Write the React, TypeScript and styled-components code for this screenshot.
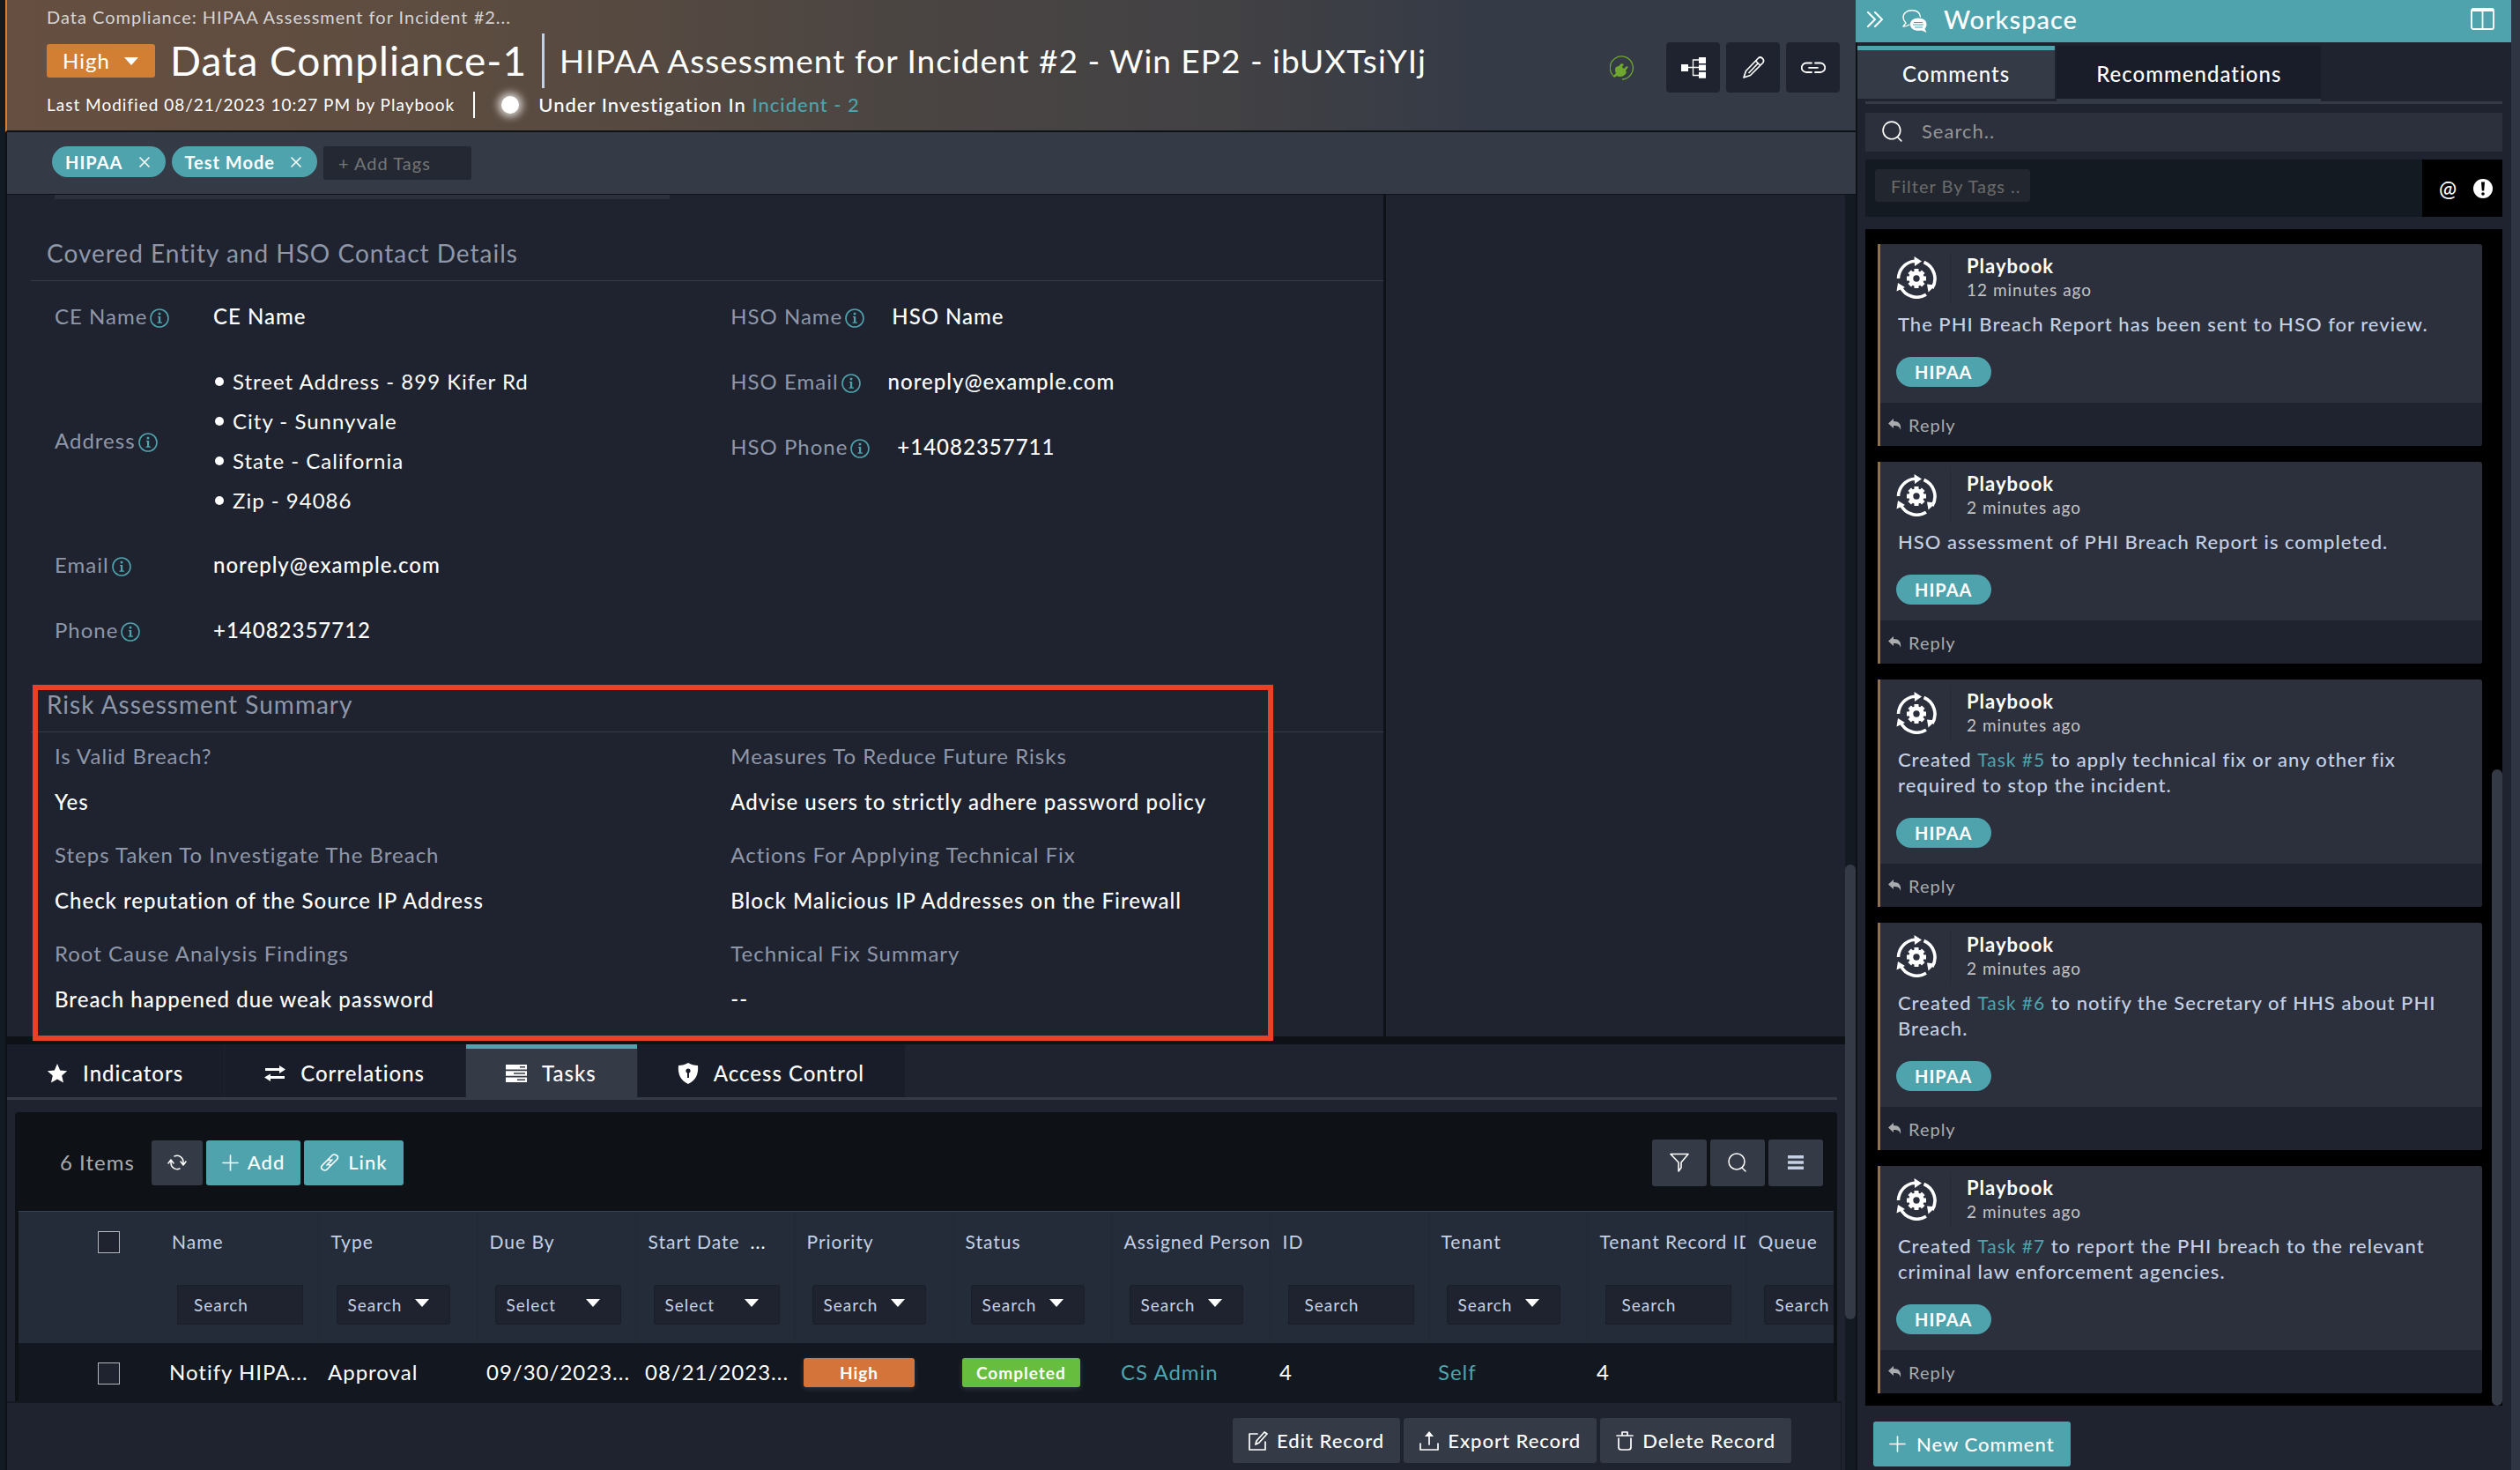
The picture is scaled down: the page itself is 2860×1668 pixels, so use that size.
import React from 'react';
import styled, { createGlobalStyle, css } from 'styled-components';

const c = {
  bg: '#1e232f',
  deep: '#0e1116',
  track: '#141a22',
  panel: '#343a46',
  card: '#2b303c',
  tab: '#181d29',
  teal: '#4fa3ad',
  muted: '#8f97a9',
  pale: '#c5d0e4',
  orange: '#d37f33',
};

const GlobalStyle = createGlobalStyle`
  *, *::before, *::after { box-sizing: border-box; }
  body {
    margin: 0;
    background: ${c.bg};
    color: #fff;
    font-family: Lato, "Open Sans", sans-serif;
    font-size: 24px;
    line-height: 30px;
    letter-spacing: 1px;
  }
  button, input, select { font: inherit; color: inherit; letter-spacing: inherit; }
  button { cursor: pointer; border: 0; padding: 0; background: none; }
  a { color: ${c.teal}; text-decoration: none; }
  h1, h2, h3, p, ul, dl, dd { margin: 0; padding: 0; font-weight: 400; }
  svg { display: block; flex: none; }
`;

/* ---------- icons ---------- */

type IconProps = { size?: number };
const line = { fill: 'none', stroke: 'currentColor', strokeLinecap: 'round', strokeLinejoin: 'round' } as const;

const Caret = ({ size = 16 }: IconProps) => (
  <svg width={size} height={size / 2 + 1} viewBox="0 0 16 9"><path d="M0 0h16L8 9z" fill="currentColor" /></svg>
);
const CloseIcon = () => (
  <svg width="12" height="12" viewBox="0 0 12 12" {...line} strokeWidth="1.6"><path d="M1 1l10 10M11 1L1 11" /></svg>
);
const SitemapIcon = () => (
  <svg width="28" height="26" viewBox="0 0 28 26">
    <path d="M8 12.500h12M20 4h-6.500v17.500H20" stroke="currentColor" strokeWidth="1.3" fill="none" />
    <path d="M0 9h8v8H0zM20 1h8v7h-8zM20 9.500h8v6.500h-8zM20 17.800h8v7h-8z" fill="currentColor" />
  </svg>
);
const PencilIcon = () => (
  <svg width="26" height="26" viewBox="0 0 26 26" {...line} strokeWidth="1.7">
    <path d="M2 24l2.500-7.500L18.500 2q2-2 4.500 0t1 5L9.500 21.500zM15.500 5l5 5M18 8L8 18.500" />
  </svg>
);
const ChainIcon = () => (
  <svg width="28" height="14" viewBox="0 0 28 14" {...line} strokeWidth="1.8">
    <path d="M12 1.500H6a5 5 0 000 10.500h6M16 1.500h6a5 5 0 010 10.500h-6M9 6.800h10" />
  </svg>
);
const PlugIcon = () => (
  <svg width="28" height="28" viewBox="0 0 28 28">
    <path d="M5 24A13 13 0 1114 27" fill="none" stroke="#6fa82e" strokeWidth="1.300" />
    <path d="M4 23l3-3q-2-4 0-7l3-1 3-3 3 1-2 3 2 2 3-3 2 1-3 4 1 2q-2 5-8 5-2 0-3-1l-3 2z" fill="#6fa82e" />
  </svg>
);
const InfoIcon = () => (
  <svg width="24" height="24" viewBox="0 0 24 24" role="img" aria-label="Info">
    <circle cx="12" cy="12" r="10" fill="none" stroke={c.teal} strokeWidth="1.6" />
    <path d="M10 10h3.200v6.500H15v1.200H9.500v-1.200H11v-5.300h-1z" fill={c.teal} />
    <circle cx="12" cy="7" r="1.500" fill={c.teal} />
  </svg>
);
const StarIcon = () => (
  <svg width="24" height="24" viewBox="0 0 24 24">
    <path d="M12 1l3.200 7.500 8 .8-6 5.300 1.800 8L12 18.400 5 22.600l1.800-8-6-5.300 8-.8z" fill="currentColor" />
  </svg>
);
const SwapIcon = () => (
  <svg width="24" height="18" viewBox="0 0 24 18">
    <path d="M1 3h16V0l7 4.500-7 4.500V6H1zM23 12H7V9.500L0 13.500 7 18v-3h16z" fill="currentColor" />
  </svg>
);
const TasksIcon = () => (
  <svg width="24" height="20" viewBox="0 0 24 20">
    <path d="M0 0h24v5.500H0zM0 7.200h24v5.500H0zM0 14.400h24V20H0z" fill="currentColor" />
    <path d="M16 2h6v1.600h-6zM9 9.200h13v1.600H9zM13 16.400h9V18h-9z" fill={c.panel} />
  </svg>
);
const ShieldIcon = () => (
  <svg width="24" height="24" viewBox="0 0 24 24">
    <path d="M12 0c3 2 7 3 11 3 1 9-2 17-11 21C3 20 0 12 1 3c4 0 8-1 11-3z" fill="currentColor" />
    <circle cx="12" cy="9" r="2.600" fill={c.tab} /><path d="M11 9h2v8h-2z" fill={c.tab} />
  </svg>
);
const RefreshIcon = () => (
  <svg width="22" height="20" viewBox="0 0 22 20" {...line} strokeWidth="1.5">
    <path d="M4 8v3a7 7 0 0010 6M18 12V9A7 7 0 008 3M1 11l3-4 3 4M15 9l3 4 3-4" />
  </svg>
);
const PlusIcon = () => (
  <svg width="19" height="19" viewBox="0 0 19 19" {...line} strokeWidth="1.6"><path d="M9.500 1v17M1 9.500h17" /></svg>
);
const ClipIcon = () => (
  <svg width="22" height="22" viewBox="0 0 22 22" {...line} strokeWidth="1.7">
    <path d="M9 8l5-5q2-2 5 0t0 5l-5 5q-2 2-5 0M13 9q-2-2-5 0l-5 5q-3 3 0 5t5 0l5-5M8 14l6-6" />
  </svg>
);
const FilterIcon = () => (
  <svg width="22" height="22" viewBox="0 0 22 22" {...line} strokeWidth="1.6"><path d="M1 1.500h20l-8 9.500v6l-3 4V11z" /></svg>
);
const LensIcon = ({ size = 22 }: IconProps) => (
  <svg width={size} height={size} viewBox="0 0 22 22" {...line} strokeWidth="1.5"><circle cx="10" cy="10" r="9" /><path d="M16 17l4 4" /></svg>
);
const MenuIcon = () => (
  <svg width="18" height="16" viewBox="0 0 18 16"><path d="M0 0h18v3.500H0zM0 6.200h18v3.500H0zM0 12.400h18V16H0z" fill={c.pale} /></svg>
);
const EditIcon = () => (
  <svg width="22" height="22" viewBox="0 0 22 22" {...line} strokeWidth="1.7">
    <path d="M10 3H1v18h18v-9M8 15l1-4 9-10 3 2-9 10z" />
  </svg>
);
const ExportIcon = () => (
  <svg width="22" height="22" viewBox="0 0 22 22" {...line} strokeWidth="1.7">
    <path d="M1 14v7h20v-7M11 15V3" /><path d="M6 6l5-6 5 6z" fill="currentColor" stroke="none" />
  </svg>
);
const TrashIcon = () => (
  <svg width="20" height="22" viewBox="0 0 20 22" {...line} strokeWidth="1.7">
    <path d="M1 5h18M7 5V1h6v4M3 8v10q0 3 3 3h8q3 0 3-3V8" />
  </svg>
);
const ChevronsIcon = () => (
  <svg width="18" height="18" viewBox="0 0 18 18" {...line} strokeWidth="2"><path d="M1 1l8 8-8 8M9 1l8 8-8 8" /></svg>
);
const ChatIcon = () => (
  <svg width="28" height="26" viewBox="0 0 28 26">
    <path d="M4 15q-3-3-3-6C1 4 5 .8 11 .8S20 4 20.500 8M4 15l-3 4q4 0 7-2" {...line} strokeWidth="1.400" />
    <path d="M18 9.500c6 0 9.500 3 9.500 7 0 2-.5 3.500-2 5l2 4.500-5.500-2.500C14 25 9 21.500 9 16.500c0-4 3.500-7 9-7z" fill="currentColor" />
    <path d="M13 14.500h10M12 17h12M14 20h9" stroke={c.teal} strokeWidth="1.200" />
  </svg>
);
const SplitIcon = () => (
  <svg width="27" height="25" viewBox="0 0 27 25" fill="none" stroke="currentColor">
    <rect x="1" y="1" width="25" height="23" rx="2" strokeWidth="1.800" />
    <path d="M1 2.500h25" strokeWidth="3" /><path d="M13.500 3v21" strokeWidth="1.800" />
  </svg>
);
const AlertIcon = () => (
  <svg width="22" height="22" viewBox="0 0 22 22">
    <circle cx="11" cy="11" r="11" fill="#fff" />
    <path d="M9 3.500h4l-.8 10h-2.400z" fill="#000" /><circle cx="11" cy="17" r="1.800" fill="#000" />
  </svg>
);
const ReplyIcon = () => (
  <svg width="15" height="13" viewBox="0 0 15 13">
    <path d="M6 0v3c6 0 9 3 8 10-1-4-3-5-8-5v3L0 5.500z" fill="currentColor" />
  </svg>
);
const PlaybookIcon = () => (
  <svg width="46" height="48" viewBox="0 0 46 48">
    <g fill="none" stroke="#fff" strokeWidth="3.600">
      <path d="M2.500 25A20.500 20.500 0 0121 5.200" />
      <path d="M31.500 6.500A20.500 20.500 0 0141 36" />
      <path d="M34 43.300A20.500 20.500 0 015 34.500" />
    </g>
    <path d="M20.500 0l8.500 5.500-8 5.500zM45 32.500l-8.500 8-1.500-9zM.5 39.500L2 30l8 5z" fill="#fff" />
    <circle cx="23" cy="25" r="6.200" fill="none" stroke="#fff" strokeWidth="5" />
    <g stroke="#fff" strokeWidth="5">
      <path d="M23 14v4M23 32v4M12 25h4M30 25h4M15.200 17.200l3 3M27.800 29.800l3 3M30.800 17.200l-3 3M18.200 29.800l-3 3" />
    </g>
  </svg>
);

/* ---------- shell ---------- */

const Shell = styled.div`
  display: grid;
  grid-template-columns: 6px minmax(0, 1fr) 744px 10px;
  height: 100vh;
  overflow: hidden;
`;
const Gutter = styled.div<{ $light?: boolean }>`
  background: ${p => (p.$light ? '#2f3543' : c.track)};
`;
const Main = styled.main`
  display: flex;
  flex-direction: column;
  min-width: 0;
  border-left: 2px solid ${c.deep};
`;

/* ---------- record header ---------- */

const Header = styled.header`
  display: flex;
  justify-content: space-between;
  align-items: flex-start;
  height: 150px;
  margin-left: -2px;
  padding: 7px 18px 0 45px;
  border-left: 2px solid ${c.orange};
  border-bottom: 2px solid ${c.deep};
  background: linear-gradient(90deg, #664f40 0%, #5c4c40 25%, #4b4542 48%, #424144 66%, #343a46 80%);
`;
const HeaderText = styled.div`
  display: flex;
  flex-direction: column;
`;
const Crumb = styled.div`
  font-size: 20px;
  line-height: 24px;
  color: #d5d5d5;
`;
const TitleRow = styled.div`
  display: flex;
  align-items: center;
  height: 62px;
  margin: 7px 0 5px;
`;
const Severity = styled.button`
  display: flex;
  align-items: center;
  justify-content: space-between;
  width: 123px;
  height: 38px;
  padding: 0 19px 0 18px;
  border-radius: 3px;
  background: ${c.orange};
`;
const RecordId = styled.h1`
  margin-left: 17px;
  font-size: 46px;
  line-height: 62px;
`;
const RecordName = styled.h2`
  margin-left: 17px;
  padding-left: 17px;
  border-left: 3px solid ${c.pale};
  font-size: 37px;
  line-height: 62px;
`;
const MetaRow = styled.div`
  display: flex;
  align-items: center;
  height: 28px;
  font-size: 19px;
`;
const Modified = styled.span`
  padding-right: 21px;
  border-right: 2px solid #fff;
`;
const Glow = styled.span`
  width: 20px;
  height: 20px;
  margin: 0 22px 0 30px;
  border-radius: 50%;
  background: #fff;
  box-shadow: 0 0 8px 4px rgba(255, 255, 255, 0.7);
`;
const Status = styled.span`
  font-size: 22px;
  font-weight: 500;
`;
const HeaderTools = styled.div`
  display: flex;
  align-items: center;
  gap: 7px;
  margin-top: 41px;
`;
const Health = styled.span`
  margin-right: 29px;
`;
const SquareButton = styled.button`
  display: grid;
  place-items: center;
  width: 61px;
  height: 57px;
  border-radius: 4px;
  background: ${c.bg};
`;

const TagBar = styled.div`
  display: flex;
  align-items: flex-start;
  gap: 7px;
  height: 71px;
  padding: 16px 51px 0;
  background: ${c.panel};
  border-bottom: 1px solid ${c.deep};
  font-size: 20px;
`;
const Tag = styled.span`
  display: flex;
  align-items: center;
  gap: 18px;
  height: 35px;
  padding: 0 18px 0 15px;
  border-radius: 18px;
  background: ${c.teal};
  font-weight: 700;
`;
const TagInput = styled.input`
  width: 168px;
  height: 38px;
  padding: 0 17px;
  border: 0;
  border-radius: 3px;
  background: #232833;
  &::placeholder { color: #757575; opacity: 1; }
`;

/* ---------- scrolling body ---------- */

const Body = styled.div`
  display: grid;
  grid-template-columns: minmax(0, 1fr) 12px;
  flex: 1;
  min-height: 0;
`;
const BodyColumn = styled.div`
  display: flex;
  flex-direction: column;
  min-width: 0;
  min-height: 0;
  padding-right: 4px;
`;
const Scrollbar = styled.div<{ $rows: string; $bg: string }>`
  display: grid;
  grid-template-rows: ${p => p.$rows};
  background: ${p => p.$bg};
  &::before { content: ''; grid-row: 2; border-radius: 6px; background: ${c.panel}; }
`;
const Details = styled.section`
  display: grid;
  grid-template-columns: minmax(0, 3fr) minmax(0, 1fr);
  margin-right: -4px;
  border-bottom: 9px solid ${c.deep};
  dd { font-weight: 500; }
`;
const DetailMain = styled.div`
  padding: 0 0 27px 27px;
  border-right: 3px solid ${c.deep};
`;
const CutField = styled.div`
  width: 698px;
  height: 5px;
  margin: 0 0 45px 27px;
  background: ${c.card};
`;
const SectionTitle = styled.h3`
  padding: 0 18px 15px;
  border-bottom: 1px solid #333b4d;
  font-size: 28px;
  line-height: 32px;
  color: ${c.muted};
`;
const Columns = styled.div`
  display: grid;
  grid-template-columns: 1fr 1fr;
  padding-top: 3px;
  dl { padding-left: 27px; }
`;
const Field = styled.div<{ $fixed?: boolean }>`
  display: flex;
  align-items: center;
  padding: 22px 0;
  ${p => (p.$fixed ? css`dt { width: 180px; }` : css`dt { padding-right: 30px; }`)}
`;
const ListField = styled(Field)`
  padding: 14px 0;
`;
const Term = styled.dt`
  display: flex;
  align-items: center;
  gap: 2px;
  color: ${c.muted};
  svg { margin-top: 4px; }
`;
const Bullets = styled.ul`
  list-style: none;
  line-height: 45px;
  li { display: flex; align-items: center; gap: 10px; }
  li::before { content: ''; width: 10px; height: 10px; margin-left: 2px; border-radius: 50%; background: #fff; }
`;
const Risk = styled.section`
  position: relative;
  margin-top: 31px;
`;
const Highlight = styled.div`
  position: absolute;
  inset: -6px 125px -32px 2px;
  border: 6px solid #ea4025;
`;
const RiskGrid = styled.dl`
  display: grid;
  grid-template-columns: 1fr 1fr;
  row-gap: 30px;
  padding-top: 12px;
  > div { padding-left: 27px; }
  dt { color: ${c.muted}; }
  dd { margin-top: 22px; }
`;

/* ---------- tabs ---------- */

const TabList = styled.div`
  display: flex;
  gap: 1px;
  height: 63px;
  margin-right: 5px;
  border-bottom: 3px solid ${c.panel};
`;
const Tab = styled.button<{ $active?: boolean }>`
  display: flex;
  align-items: center;
  gap: 17px;
  height: ${p => (p.$active ? 63 : 60)}px;
  padding: 5px 46px 0 45px;
  background: ${p => (p.$active ? c.panel : c.tab)};
  font-weight: 500;
  ${p => p.$active && css`padding-top: 0; padding-bottom: 2px; border-top: 5px solid ${c.teal};`}
`;

/* ---------- tasks ---------- */

const Tasks = styled.section`
  display: flex;
  flex-direction: column;
  flex: 1;
  min-height: 0;
  overflow: hidden;
  margin: 14px 5px 0 9px;
  padding: 0 4px;
  border-radius: 4px 4px 0 0;
  background: ${c.deep};
`;
const Toolbar = styled.div`
  display: flex;
  align-items: center;
  gap: 4px;
  height: 112px;
  padding: 2px 12px 0 47px;
`;
const Count = styled.span`
  margin-right: 15px;
  color: #a9abae;
`;
const Spacer = styled.span`
  flex: 1;
`;
const Button = styled.button<{ $tone?: 'teal' | 'panel' }>`
  display: flex;
  align-items: center;
  justify-content: center;
  gap: 10px;
  height: 51px;
  padding: 0 18px;
  border-radius: 3px;
  background: ${p => (p.$tone === 'teal' ? c.teal : c.panel)};
  font-size: 22px;
  font-weight: 500;
`;
const ToolButton = styled(Button)`
  width: 62px;
  height: 53px;
`;
const TableClip = styled.div`
  overflow: hidden;
  border-top: 1px solid #33425a;
`;
const Table = styled.table`
  width: 2140px;
  table-layout: fixed;
  border-collapse: collapse;
  th, td { padding: 0; text-align: left; font-weight: 400; white-space: nowrap; overflow: hidden; }
  thead th { height: 149px; background: #232c38; border-right: 1px solid #202833; vertical-align: top; }
  tbody td { height: 66px; padding-left: 11px; background: #121720; }
  thead th:first-child { border-right: 0; }
`;
const HeadCell = styled.div`
  display: flex;
  flex-direction: column;
  gap: 34px;
  padding: 19px 0 0 14px;
  font-size: 21px;
  line-height: 30px;
  color: ${c.pale};
`;
const More = styled.span`
  margin-left: 12px;
  color: #fff;
`;
const CheckCell = styled.div`
  display: flex;
  justify-content: flex-end;
  padding: 22px 45px 0 0;
`;
const RowCheck = styled(CheckCell)`
  padding-top: 2px;
`;
const Checkbox = styled.input`
  appearance: none;
  width: 25px;
  height: 25px;
  margin: 0;
  border: 1px solid #b4b7bc;
  background: ${c.bg};
`;
const filterBox = css`
  height: 45px;
  border: 1px solid #191e28;
  background: ${c.bg};
  color: ${c.pale};
  font-size: 19px;
`;
const FilterInput = styled.input`
  ${filterBox}
  width: 143px;
  margin-left: 6px;
  padding: 0 18px;
  &::placeholder { color: inherit; opacity: 1; }
`;
const SelectWrap = styled.label<{ $wide?: boolean }>`
  position: relative;
  width: ${p => (p.$wide ? 143 : 129)}px;
  margin-left: 6px;
  svg { position: absolute; top: 16px; right: 24px; pointer-events: none; color: #fff; }
`;
const Select = styled.select`
  ${filterBox}
  display: block;
  appearance: none;
  width: 100%;
  padding: 0 12px;
  border-radius: 3px;
`;
const Badge = styled.span<{ $color: string }>`
  display: inline-block;
  min-width: 126px;
  padding: 0 16px;
  border-radius: 3px;
  background: ${p => p.$color};
  box-shadow: 0 2px 6px rgba(255, 255, 255, 0.12);
  font-size: 19px;
  line-height: 33px;
  font-weight: 700;
  text-align: center;
  vertical-align: middle;
`;
const Actions = styled.footer`
  display: flex;
  flex: none;
  justify-content: flex-end;
  gap: 4px;
  height: 78px;
  padding: 17px 56px 0;
  border-top: 2px solid #141821;
  border-right: 1px solid #141821;
`;

/* ---------- workspace ---------- */

const Aside = styled.aside`
  display: flex;
  flex-direction: column;
  min-width: 0;
  min-height: 0;
  border-left: 2px solid ${c.deep};
`;
const AsideHead = styled.header`
  display: flex;
  align-items: center;
  height: 48px;
  margin-left: -2px;
  padding: 0 19px 5px 13px;
  background: ${c.teal};
`;
const AsideTitle = styled.h2`
  flex: 1;
  margin-left: 19px;
  font-size: 29px;
  line-height: 42px;
  font-weight: 500;
`;
const ChatWrap = styled.span`
  margin: 4px 0 0 22px;
`;
const AsideTabs = styled.div`
  display: flex;
  gap: 2px;
  height: 66px;
  margin-top: 4px;
`;
const AsideTab = styled.button<{ $active?: boolean }>`
  height: ${p => (p.$active ? 60 : 63)}px;
  padding: ${p => (p.$active ? '0 51px 2px' : '3px 45px 0')};
  border-top: ${p => (p.$active ? `5px solid ${c.teal}` : 0)};
  border-bottom: ${p => (p.$active ? 0 : `3px solid ${c.panel}`)};
  background: ${p => (p.$active ? c.panel : c.tab)};
  font-weight: 500;
`;
const AsideBody = styled.div`
  display: flex;
  flex-direction: column;
  flex: 1;
  min-height: 0;
  margin: -3px 10px 0 9px;
  border-top: 3px solid ${c.panel};
`;
const SearchBox = styled.label`
  display: flex;
  align-items: center;
  gap: 21px;
  height: 44px;
  margin-top: 10px;
  padding: 0 19px 2px;
  background: ${c.card};
  input {
    flex: 1;
    border: 0;
    padding: 0;
    background: none;
    outline: 0;
    font-size: 22px;
  }
  input::placeholder { color: #959595; opacity: 1; }
`;
const FilterBar = styled.div`
  display: flex;
  justify-content: space-between;
  height: 65px;
  margin-top: 9px;
  padding-left: 11px;
  background: ${c.track};
`;
const FilterTags = styled.input`
  width: 176px;
  height: 37px;
  margin-top: 11px;
  padding: 0 0 0 18px;
  border: 0;
  border-radius: 3px;
  background: #22272f;
  font-size: 20px;
  &::placeholder { color: #6b6b6b; opacity: 1; }
`;
const Toggles = styled.div`
  display: flex;
  align-items: center;
  justify-content: space-between;
  width: 91px;
  padding: 0 11px 0 19px;
  background: #000;
  font-weight: 500;
`;
const Feed = styled.div`
  display: grid;
  grid-template-columns: minmax(0, 1fr) 12px;
  flex: 1;
  min-height: 0;
  margin-top: 14px;
  background: #000;
`;
const FeedList = styled.div`
  display: flex;
  flex-direction: column;
  gap: 18px;
  padding: 17px 11px 14px 14px;
`;
const Card = styled.article`
  border-left: 3px solid #8f7340;
  border-radius: 0 3px 3px 0;
  background: ${c.card};
`;
const CardBody = styled.div`
  padding: 8px 30px 18px 20px;
`;
const Author = styled.div`
  display: flex;
  align-items: center;
  height: 61px;
`;
const Avatar = styled.span`
  padding: 6px 15px 7px 0;
  margin-left: -2px;
  border-right: 1px solid #252a35;
`;
const Names = styled.div`
  margin: 0 0 2px 18px;
`;
const Name = styled.div`
  font-size: 22px;
  line-height: 28px;
  font-weight: 700;
`;
const Ago = styled.div`
  font-size: 19px;
  line-height: 26px;
  color: #c3c4c7;
`;
const Message = styled.p`
  margin-top: 7px;
  font-size: 22px;
  font-weight: 500;
  line-height: 29px;
  color: ${c.pale};
  a { font-size: 21px; font-weight: 400; }
`;
const Pill = styled.span`
  display: inline-block;
  margin: 23px 0 0 -2px;
  padding: 0 21px;
  border-radius: 17px;
  background: ${c.teal};
  font-size: 20px;
  line-height: 34px;
  font-weight: 700;
  vertical-align: top;
`;
const Reply = styled.button`
  display: flex;
  align-items: center;
  gap: 8px;
  width: 100%;
  height: 49px;
  padding: 0 9px;
  border-radius: 0 0 3px 0;
  background: ${c.bg};
  color: #a9abae;
  font-size: 20px;
`;
const AsideFoot = styled.div`
  padding: 18px 9px 4px;
`;
const NewComment = styled(Button)`
  gap: 12px;
`;

/* ---------- data ---------- */

type Col = { label: string; kind: 'input' | 'search' | 'select'; more?: boolean };
const columns: Col[] = [
  { label: 'Name', kind: 'input' },
  { label: 'Type', kind: 'search' },
  { label: 'Due By', kind: 'select' },
  { label: 'Start Date', kind: 'select', more: true },
  { label: 'Priority', kind: 'search' },
  { label: 'Status', kind: 'search' },
  { label: 'Assigned Person', kind: 'search' },
  { label: 'ID', kind: 'input' },
  { label: 'Tenant', kind: 'search' },
  { label: 'Tenant Record ID', kind: 'input' },
  { label: 'Queue', kind: 'search' },
];

const comments: { ago: string; text: React.ReactNode }[] = [
  { ago: '12 minutes ago', text: 'The PHI Breach Report has been sent to HSO for review.' },
  { ago: '2 minutes ago', text: 'HSO assessment of PHI Breach Report is completed.' },
  { ago: '2 minutes ago', text: <>Created <a href="#task-5">Task #5</a> to apply technical fix or any other fix required to stop the incident.</> },
  { ago: '2 minutes ago', text: <>Created <a href="#task-6">Task #6</a> to notify the Secretary of HHS about PHI Breach.</> },
  { ago: '2 minutes ago', text: <>Created <a href="#task-7">Task #7</a> to report the PHI breach to the relevant criminal law enforcement agencies.</> },
];

const risks = [
  ['Is Valid Breach?', 'Yes'],
  ['Measures To Reduce Future Risks', 'Advise users to strictly adhere password policy'],
  ['Steps Taken To Investigate The Breach', 'Check reputation of the Source IP Address'],
  ['Actions For Applying Technical Fix', 'Block Malicious IP Addresses on the Firewall'],
  ['Root Cause Analysis Findings', 'Breach happened due weak password'],
  ['Technical Fix Summary', '--'],
];

const Info = ({ label, value, fixed }: { label: string; value: string; fixed?: boolean }) => (
  <Field $fixed={fixed}><Term>{label}<InfoIcon /></Term><dd>{value}</dd></Field>
);

const ColumnHead = ({ label, kind, more }: Col) => (
  <th scope="col">
    <HeadCell>
      <div>{label}{more && <More>...</More>}</div>
      {kind === 'input' ? (
        <FilterInput placeholder="Search" aria-label={`Search ${label}`} />
      ) : (
        <SelectWrap $wide={kind === 'select'}>
          <Select aria-label={`Filter ${label}`}><option>{kind === 'select' ? 'Select' : 'Search'}</option></Select>
          <Caret />
        </SelectWrap>
      )}
    </HeadCell>
  </th>
);

export default function App() {
  return (
    <>
      <GlobalStyle />
      <Shell>
        <Gutter />
        <Main>
          <Header>
            <HeaderText>
              <Crumb>Data Compliance: HIPAA Assessment for Incident #2...</Crumb>
              <TitleRow>
                <Severity>High<Caret /></Severity>
                <RecordId>Data Compliance-1</RecordId>
                <RecordName>HIPAA Assessment for Incident #2 - Win EP2 - ibUXTsiYIj</RecordName>
              </TitleRow>
              <MetaRow>
                <Modified>Last Modified 08/21/2023 10:27 PM by Playbook</Modified>
                <Glow />
                <Status>Under Investigation In <a href="#incident-2">Incident - 2</a></Status>
              </MetaRow>
            </HeaderText>
            <HeaderTools>
              <Health><PlugIcon /></Health>
              <SquareButton aria-label="Hierarchy"><SitemapIcon /></SquareButton>
              <SquareButton aria-label="Edit"><PencilIcon /></SquareButton>
              <SquareButton aria-label="Copy link"><ChainIcon /></SquareButton>
            </HeaderTools>
          </Header>
          <TagBar>
            <Tag>HIPAA<CloseIcon /></Tag>
            <Tag>Test Mode<CloseIcon /></Tag>
            <TagInput placeholder="+ Add Tags" aria-label="Add tags" />
          </TagBar>
          <Body>
            <BodyColumn>
              <Details>
                <DetailMain>
                  <CutField />
                  <SectionTitle>Covered Entity and HSO Contact Details</SectionTitle>
                  <Columns>
                    <dl>
                      <Info fixed label="CE Name" value="CE Name" />
                      <ListField $fixed>
                        <Term>Address<InfoIcon /></Term>
                        <dd>
                          <Bullets>
                            <li>Street Address - 899 Kifer Rd</li>
                            <li>City - Sunnyvale</li>
                            <li>State - California</li>
                            <li>Zip - 94086</li>
                          </Bullets>
                        </dd>
                      </ListField>
                      <Info fixed label="Email" value="noreply@example.com" />
                      <Info fixed label="Phone" value="+14082357712" />
                    </dl>
                    <dl>
                      <Info label="HSO Name" value="HSO Name" />
                      <Info label="HSO Email" value="noreply@example.com" />
                      <Info label="HSO Phone" value="+14082357711" />
                    </dl>
                  </Columns>
                  <Risk>
                    <SectionTitle>Risk Assessment Summary</SectionTitle>
                    <RiskGrid>
                      {risks.map(([q, a]) => <div key={q}><dt>{q}</dt><dd>{a}</dd></div>)}
                    </RiskGrid>
                    <Highlight />
                  </Risk>
                </DetailMain>
              </Details>
              <TabList>
                <Tab><StarIcon />Indicators</Tab>
                <Tab><SwapIcon />Correlations</Tab>
                <Tab $active><TasksIcon />Tasks</Tab>
                <Tab><ShieldIcon />Access Control</Tab>
              </TabList>
              <Tasks>
                <Toolbar>
                  <Count>6 Items</Count>
                  <Button aria-label="Refresh"><RefreshIcon /></Button>
                  <Button $tone="teal"><PlusIcon />Add</Button>
                  <Button $tone="teal"><ClipIcon />Link</Button>
                  <Spacer />
                  <ToolButton aria-label="Filter"><FilterIcon /></ToolButton>
                  <ToolButton aria-label="Search"><LensIcon /></ToolButton>
                  <ToolButton aria-label="Menu"><MenuIcon /></ToolButton>
                </Toolbar>
                <TableClip>
                  <Table>
                    <colgroup>
                      <col width="160" />
                      {columns.map(col => <col key={col.label} width="180" />)}
                    </colgroup>
                    <thead>
                      <tr>
                        <th><CheckCell><Checkbox type="checkbox" aria-label="Select all" /></CheckCell></th>
                        {columns.map(col => <ColumnHead key={col.label} {...col} />)}
                      </tr>
                    </thead>
                    <tbody>
                      <tr>
                        <td><RowCheck><Checkbox type="checkbox" aria-label="Select row" /></RowCheck></td>
                        <td>Notify HIPA...</td>
                        <td>Approval</td>
                        <td>09/30/2023...</td>
                        <td>08/21/2023...</td>
                        <td><Badge $color="#d5743a">High</Badge></td>
                        <td><Badge $color="#67bd3d">Completed</Badge></td>
                        <td><a href="#cs-admin">CS Admin</a></td>
                        <td>4</td>
                        <td><a href="#self">Self</a></td>
                        <td>4</td>
                        <td />
                      </tr>
                    </tbody>
                  </Table>
                </TableClip>
              </Tasks>
              <Actions>
                <Button><EditIcon />Edit Record</Button>
                <Button><ExportIcon />Export Record</Button>
                <Button><TrashIcon />Delete Record</Button>
              </Actions>
            </BodyColumn>
            <Scrollbar $rows="760fr 516fr 171fr" $bg={c.track} />
          </Body>
        </Main>
        <Aside>
          <AsideHead>
            <ChevronsIcon />
            <ChatWrap><ChatIcon /></ChatWrap>
            <AsideTitle>Workspace</AsideTitle>
            <SplitIcon />
          </AsideHead>
          <AsideTabs>
            <AsideTab $active>Comments</AsideTab>
            <AsideTab>Recommendations</AsideTab>
          </AsideTabs>
          <AsideBody>
            <SearchBox><LensIcon size={24} /><input placeholder="Search.." aria-label="Search comments" /></SearchBox>
            <FilterBar>
              <FilterTags placeholder="Filter By Tags .." aria-label="Filter by tags" />
              <Toggles><button>@</button><button aria-label="Important"><AlertIcon /></button></Toggles>
            </FilterBar>
            <Feed>
              <FeedList>
                {comments.map((m, i) => (
                  <Card key={i}>
                    <CardBody>
                      <Author>
                        <Avatar><PlaybookIcon /></Avatar>
                        <Names><Name>Playbook</Name><Ago>{m.ago}</Ago></Names>
                      </Author>
                      <Message>{m.text}</Message>
                      <Pill>HIPAA</Pill>
                    </CardBody>
                    <Reply><ReplyIcon />Reply</Reply>
                  </Card>
                ))}
              </FeedList>
              <Scrollbar $rows="613fr 722fr" $bg="#000" />
            </Feed>
            <AsideFoot><NewComment $tone="teal"><PlusIcon />New Comment</NewComment></AsideFoot>
          </AsideBody>
        </Aside>
        <Gutter $light />
      </Shell>
    </>
  );
}
